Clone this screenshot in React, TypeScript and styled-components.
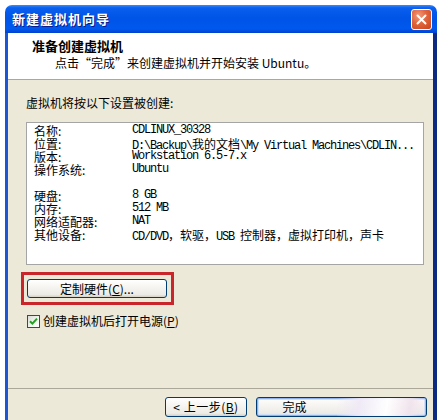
import React from "react";
import styled, { createGlobalStyle } from "styled-components";

const GlobalStyle = createGlobalStyle`
  html, body { margin: 0; padding: 0; background: #ffffff; overflow: hidden; }
  body { font-family: "Noto Sans CJK SC", "Liberation Sans", sans-serif; font-size: 12px; color: #000; }
`;

const Page = styled.div`
  width: 442px;
  height: 420px;
  box-sizing: border-box;
  padding: 5px 0 0 5px;
  overflow: hidden;
`;

const Window = styled.div`
  width: 432px;
  display: flex;
  flex-direction: column;
`;

const TitleBar = styled.div`
  height: 28px;
  box-sizing: border-box;
  border-radius: 7px 7px 0 0;
  background: linear-gradient(
    to bottom,
    #3a8cf8 0%,
    #0a5fef 10%,
    #0054e6 45%,
    #0058ee 85%,
    #0043cf 100%
  );
  display: flex;
  align-items: center;
  justify-content: space-between;
  padding: 0 5px 0 7px;
`;

const TitleText = styled.div`
  color: #ffffff;
  font-weight: bold;
  font-size: 13px;
  letter-spacing: 1px;
  line-height: 16px;
  text-shadow: 1px 1px 0 #0a1c8a;
`;

const CloseButton = styled.div`
  width: 21px;
  height: 21px;
  box-sizing: border-box;
  border: 1px solid #ffffff;
  border-radius: 3px;
  background: radial-gradient(circle at 35% 30%, #f39a7c 0%, #e0643d 45%, #c9441a 100%);
  display: flex;
  align-items: center;
  justify-content: center;
`;

const Frame = styled.div`
  display: flex;
  flex-direction: column;
  border-left: 3px solid #1a56d6;
  border-right: 4px solid #0c2a82;
`;

const Header = styled.div`
  height: 47px;
  box-sizing: border-box;
  background: #ffffff;
  border-bottom: 1px solid #aca899;
  padding: 5px 0 0 24px;
`;

const HeaderTitle = styled.div`
  font-weight: bold;
  font-size: 13px;
  line-height: 16px;
`;

const HeaderSub = styled.div`
  padding-left: 23px;
  margin-top: 1px;
  font-size: 12px;
  line-height: 16px;
`;

const Body = styled.div`
  height: 308px;
  box-sizing: border-box;
  background: #ece9d8;
  padding: 16px 9px 0 18px;
  display: flex;
  flex-direction: column;
  align-items: flex-start;
`;

const Intro = styled.div`
  line-height: 14px;
`;

const ListBox = styled.div`
  margin-top: 12px;
  width: 398px;
  height: 143px;
  box-sizing: border-box;
  background: #ffffff;
  border: 1px solid #a5a5a5;
  padding: 1px 0 0 7px;
  display: grid;
  grid-template-columns: 98px auto;
  grid-auto-rows: 13px;
  align-content: start;
`;

const Label = styled.div`
  font-size: 12px;
  line-height: 13px;
  white-space: nowrap;
`;

const Value = styled.div`
  font-family: "Liberation Mono", "Noto Sans CJK SC", monospace;
  font-size: 12px;
  letter-spacing: -1.2px;
  line-height: 13px;
  white-space: nowrap;
`;

const Cjk = styled.span`
  font-family: "Noto Sans CJK SC", sans-serif;
  letter-spacing: 0;
  font-size: 12px;
`;

const Spacer = styled.div`
  grid-column: 1 / span 2;
`;

const Highlight = styled.div`
  margin: 7px 0 0 -5px;
  border: 3px solid #c8262b;
  padding: 4px 4px 4px 3px;
`;

const XpButton = styled.button<{ $w: number; $h: number; $default?: boolean }>`
  width: ${(p) => p.$w}px;
  height: ${(p) => p.$h}px;
  box-sizing: border-box;
  border: 1px solid #003c74;
  border-radius: 3px;
  background: linear-gradient(to bottom, #ffffff 0%, #f6f5f1 40%, #ecebe6 85%, #d6d0c5 100%);
  box-shadow: ${(p) =>
    p.$default ? "inset 0 0 0 1px #8fb2ef, inset 0 0 0 2px #cfe0fb" : "none"};
  font-family: "Noto Sans CJK SC", "Liberation Sans", sans-serif;
  font-size: 12px;
  line-height: 14px;
  padding: 0;
  color: #000;
  display: flex;
  align-items: center;
  justify-content: center;
  position: relative;
  overflow: hidden;
`;

const Mnemonic = styled.span`
  text-decoration: underline;
`;

const CheckRow = styled.label`
  margin-top: 9px;
  margin-left: 1px;
  display: flex;
  align-items: center;
  gap: 3px;
  line-height: 14px;
`;

const CheckBox = styled.span`
  width: 13px;
  height: 13px;
  box-sizing: border-box;
  border: 1px solid #1c5180;
  background: linear-gradient(135deg, #dcdcd7 0%, #f5f5f2 60%, #ffffff 100%);
  display: flex;
  align-items: center;
  justify-content: center;
`;

const Footer = styled.div`
  background: #ece9d8;
  border-top: 1px solid #aca899;
  height: 40px;
  box-sizing: border-box;
  padding: 8px 6px 0 0;
  display: flex;
  justify-content: flex-end;
  align-items: flex-start;
  gap: 9px;
`;

const BackLabel = styled.span`
  letter-spacing: 0.5px;
`;

const FinishLabel = styled.span`
  margin-right: 94px;
`;

const Smudge = styled.span`
  position: absolute;
  left: 80px;
  top: 0;
  width: 90px;
  height: 100%;
  background: linear-gradient(100deg, rgba(255,255,255,0) 0%, rgba(238,232,246,0.9) 25%, rgba(255,255,255,0.95) 55%, rgba(240,226,236,0.9) 80%, rgba(255,255,255,0) 100%);
`;

const rows: [string, React.ReactNode][] = [
  ["名称:", "CDLINUX_30328"],
  ["位置:", <>D:\Backup\<Cjk>我的文档</Cjk>\My Virtual Machines\CDLIN...</>],
  ["版本:", "Workstation 6.5-7.x"],
  ["操作系统:", "Ubuntu"],
];

const rows2: [string, React.ReactNode][] = [
  ["硬盘:", "8 GB"],
  ["内存:", "512 MB"],
  ["网络适配器:", "NAT"],
  [
    "其他设备:",
    <>
      CD/DVD<Cjk>，软驱，</Cjk>USB <Cjk>控制器，虚拟打印机，声卡</Cjk>
    </>,
  ],
];

export default function App() {
  return (
    <Page>
      <GlobalStyle />
      <Window>
        <TitleBar>
          <TitleText>新建虚拟机向导</TitleText>
          <CloseButton>
            <svg width="11" height="11" viewBox="0 0 11 11">
              <path d="M1.5 1.5 L9.5 9.5 M9.5 1.5 L1.5 9.5" stroke="#ffffff" strokeWidth="2" strokeLinecap="round" />
            </svg>
          </CloseButton>
        </TitleBar>
        <Frame>
          <Header>
            <HeaderTitle>准备创建虚拟机</HeaderTitle>
            <HeaderSub>点击“完成”来创建虚拟机并开始安装 Ubuntu。</HeaderSub>
          </Header>
          <Body>
            <Intro>虚拟机将按以下设置被创建:</Intro>
            <ListBox>
              {rows.map(([l, v]) => (
                <React.Fragment key={l}>
                  <Label>{l}</Label>
                  <Value>{v}</Value>
                </React.Fragment>
              ))}
              <Spacer />
              {rows2.map(([l, v]) => (
                <React.Fragment key={l}>
                  <Label>{l}</Label>
                  <Value>{v}</Value>
                </React.Fragment>
              ))}
            </ListBox>
            <Highlight>
              <XpButton $w={140} $h={19}>
                定制硬件(<Mnemonic>C</Mnemonic>)...
              </XpButton>
            </Highlight>
            <CheckRow>
              <CheckBox>
                <svg width="9" height="9" viewBox="0 0 9 9">
                  <path d="M1 4.2 L3.4 6.6 L8 1.6" stroke="#21a121" strokeWidth="2" fill="none" />
                </svg>
              </CheckBox>
              <span>
                创建虚拟机后打开电源(<Mnemonic>P</Mnemonic>)
              </span>
            </CheckRow>
          </Body>
          <Footer>
            <XpButton $w={82} $h={20}>
              <BackLabel>
                &lt; 上一步(<Mnemonic>B</Mnemonic>)
              </BackLabel>
            </XpButton>
            <XpButton $w={171} $h={20} $default>
              <FinishLabel>完成</FinishLabel>
              <Smudge />
            </XpButton>
          </Footer>
        </Frame>
      </Window>
    </Page>
  );
}
